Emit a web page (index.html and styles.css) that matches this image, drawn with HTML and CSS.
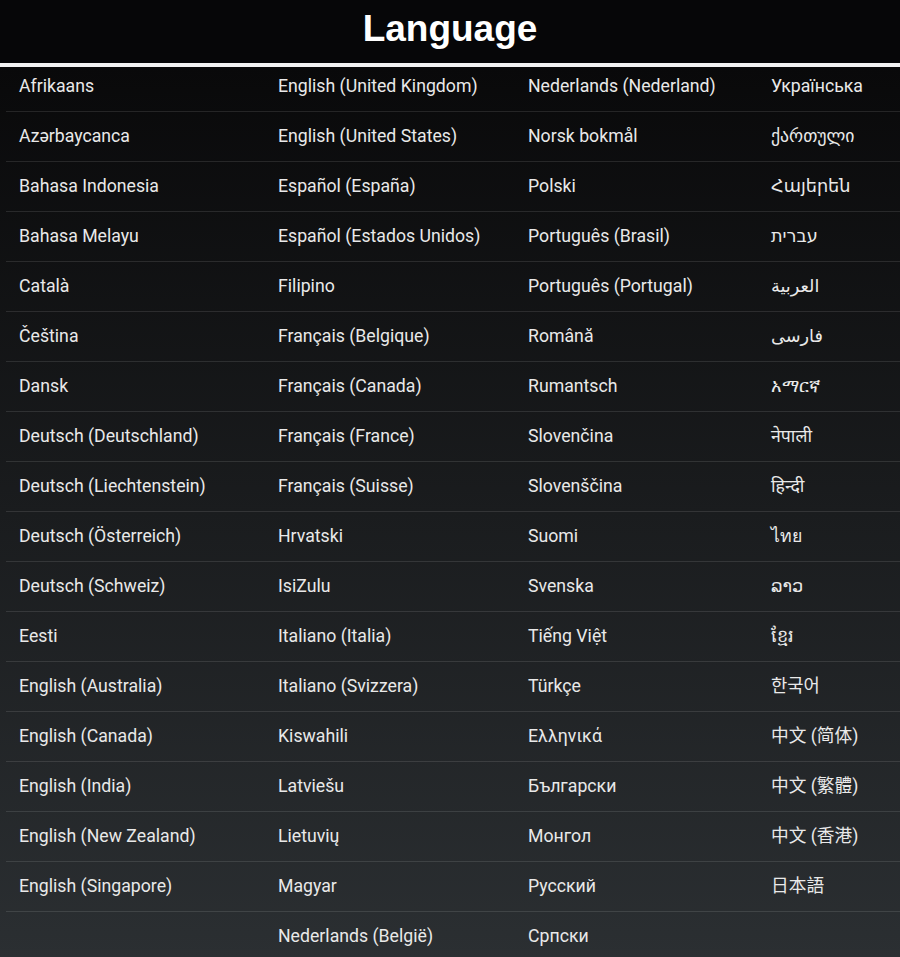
FILE: index.html
```html
<!DOCTYPE html>
<html lang="en">
<head>
    <meta charset="UTF-8">
    <meta name="viewport" content="width=device-width, initial-scale=1.0">
    <title>Language</title>
    <link rel="stylesheet" href="styles.css">
</head>
<body>
    <div class="screen">
        <header class="title-bar">
            <h1 class="title">Language</h1>
        </header>
        <div class="title-rule"></div>

        <div class="list-viewport">
            <div class="lang-grid">
                <div class="lang">Afrikaans</div>
                <div class="lang">English (United Kingdom)</div>
                <div class="lang">Nederlands (Nederland)</div>
                <div class="lang">Українська</div>

                <div class="lang">Azərbaycanca</div>
                <div class="lang">English (United States)</div>
                <div class="lang">Norsk bokmål</div>
                <div class="lang">ქართული</div>

                <div class="lang">Bahasa Indonesia</div>
                <div class="lang">Español (España)</div>
                <div class="lang">Polski</div>
                <div class="lang">Հայերեն</div>

                <div class="lang">Bahasa Melayu</div>
                <div class="lang">Español (Estados Unidos)</div>
                <div class="lang">Português (Brasil)</div>
                <div class="lang" dir="rtl">עברית</div>

                <div class="lang">Català</div>
                <div class="lang">Filipino</div>
                <div class="lang">Português (Portugal)</div>
                <div class="lang" dir="rtl">العربية</div>

                <div class="lang">Čeština</div>
                <div class="lang">Français (Belgique)</div>
                <div class="lang">Română</div>
                <div class="lang" dir="rtl">فارسی</div>

                <div class="lang">Dansk</div>
                <div class="lang">Français (Canada)</div>
                <div class="lang">Rumantsch</div>
                <div class="lang">አማርኛ</div>

                <div class="lang">Deutsch (Deutschland)</div>
                <div class="lang">Français (France)</div>
                <div class="lang">Slovenčina</div>
                <div class="lang">नेपाली</div>

                <div class="lang">Deutsch (Liechtenstein)</div>
                <div class="lang">Français (Suisse)</div>
                <div class="lang">Slovenščina</div>
                <div class="lang">हिन्दी</div>

                <div class="lang">Deutsch (Österreich)</div>
                <div class="lang">Hrvatski</div>
                <div class="lang">Suomi</div>
                <div class="lang">ไทย</div>

                <div class="lang">Deutsch (Schweiz)</div>
                <div class="lang">IsiZulu</div>
                <div class="lang">Svenska</div>
                <div class="lang">ລາວ</div>

                <div class="lang">Eesti</div>
                <div class="lang">Italiano (Italia)</div>
                <div class="lang">Tiếng Việt</div>
                <div class="lang">ខ្មែរ</div>

                <div class="lang">English (Australia)</div>
                <div class="lang">Italiano (Svizzera)</div>
                <div class="lang">Türkçe</div>
                <div class="lang">한국어</div>

                <div class="lang">English (Canada)</div>
                <div class="lang">Kiswahili</div>
                <div class="lang">Ελληνικά</div>
                <div class="lang">中文 (简体)</div>

                <div class="lang">English (India)</div>
                <div class="lang">Latviešu</div>
                <div class="lang">Български</div>
                <div class="lang">中文 (繁體)</div>

                <div class="lang">English (New Zealand)</div>
                <div class="lang">Lietuvių</div>
                <div class="lang">Монгол</div>
                <div class="lang">中文 (香港)</div>

                <div class="lang">English (Singapore)</div>
                <div class="lang">Magyar</div>
                <div class="lang">Русский</div>
                <div class="lang">日本語</div>

                <div class="lang lang-empty"></div>
                <div class="lang">Nederlands (België)</div>
                <div class="lang">Српски</div>
                <div class="lang lang-empty"></div>
            </div>
        </div>
    </div>
</body>
</html>
```

FILE: styles.css
```css
body {
    margin: 0;
    padding: 0;
    background-color: #060608;
    font-family: Roboto, "Noto Sans", "DejaVu Sans", "Noto Sans CJK SC", sans-serif;
    overflow: hidden;
}

.screen {
    width: 900px;
    height: 957px;
    display: flex;
    flex-direction: column;
    overflow: hidden;
}

.title-bar {
    height: 63px;
    background: #060608;
    display: flex;
    align-items: center;
    justify-content: center;
}

.title {
    margin: 0;
    padding-bottom: 6px;
    font-family: "Liberation Sans", Arial, sans-serif;
    font-weight: bold;
    font-size: 37px;
    color: #ffffff;
}

.title-rule {
    height: 4px;
    background: #f2f2f2;
}

/* list area: dark gradient, scrolled a few pixels under the title */
.list-viewport {
    flex: 1;
    overflow: hidden;
    background: linear-gradient(#09090a, #2b2f32);
    padding-left: 6px;
}

.lang-grid {
    margin-top: -5px;
    display: grid;
    grid-template-columns: 259px 250px 243px 1fr;
}

.lang {
    height: 49px;
    line-height: 49px;
    padding-left: 13px;
    border-bottom: 1px solid rgba(255, 255, 255, 0.11);
    color: #e9e9e9;
    font-size: 17.7px;
    white-space: nowrap;
    text-align: left;
}

.lang[dir="rtl"] {
    direction: ltr;
    unicode-bidi: plaintext;
}

.lang-empty {
    border-bottom-color: transparent;
}
```
